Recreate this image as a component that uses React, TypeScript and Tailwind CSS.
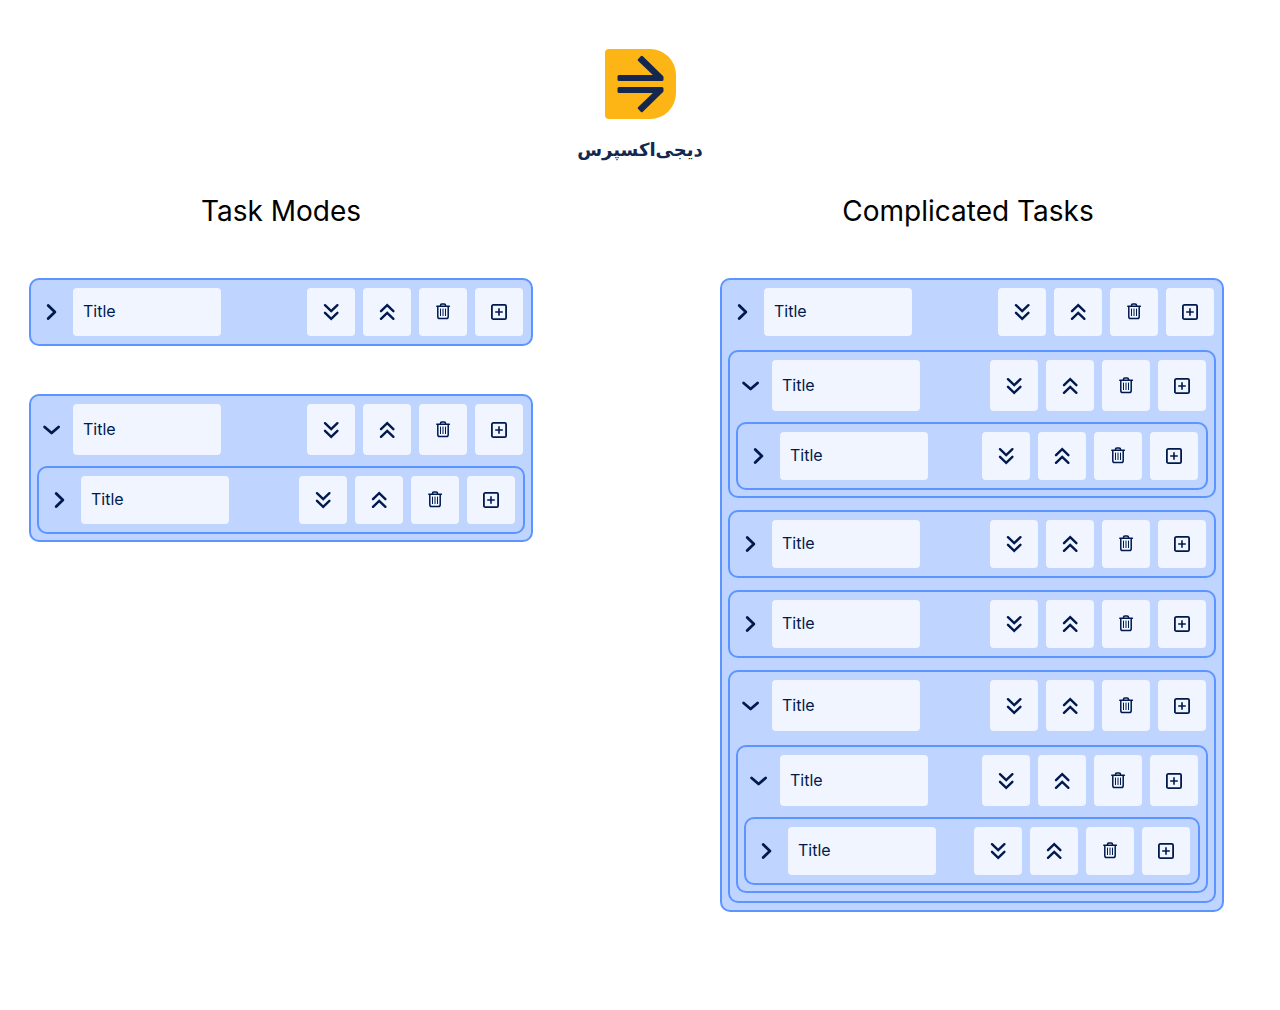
import { useState } from "react";

type Task = { id: string; open?: boolean; children?: Task[] };

const simpleTask: Task = { id: "a" };
const nestedTask: Task = { id: "b", open: true, children: [{ id: "b1" }] };
const complicatedTask: Task = {
  id: "c",
  children: [
    { id: "c1", open: true, children: [{ id: "c1a" }] },
    { id: "c2" },
    { id: "c3" },
    {
      id: "c4",
      open: true,
      children: [{ id: "c4a", open: true, children: [{ id: "c4a1" }] }],
    },
  ],
};

function Logo() {
  return (
    <svg width="71" height="70" viewBox="0 0 71 70" aria-hidden="true">
      <path d="M4 0H45A26 26 0 0 1 71 26V44A26 26 0 0 1 45 70H4A4 4 0 0 1 0 66V4A4 4 0 0 1 4 0Z" fill="#fdb515" />
      <g fill="#14284f" stroke="#14284f" strokeWidth="3" strokeLinejoin="round">
        <path d="M14 27.5H51.5L34.2 11L36.8 8.4L57 28V30.5H14Z" />
        <path d="M14 42.5H51.5L34.2 59L36.8 61.6L57 42V39.5H14Z" />
      </g>
    </svg>
  );
}

function Chevron({ open }: { open: boolean }) {
  return (
    <svg width="20" height="20" viewBox="0 0 20 20" fill="none" stroke="#001a4d" strokeWidth="2.8" strokeLinecap="round" strokeLinejoin="round" aria-hidden="true">
      {open ? <path d="M3.6 7L10.6 13L17.6 7" /> : <path d="M7.2 3.5L13.9 10L7.2 16.5" />}
    </svg>
  );
}

function DoubleDown() {
  return (
    <svg width="20" height="20" viewBox="0 0 20 20" fill="none" stroke="#001a4d" strokeWidth="2.4" strokeLinecap="round" aria-hidden="true">
      <path d="M4 3.2L10.2 9.2L16.4 3.2M4 10.8L10.2 16.8L16.4 10.8" />
    </svg>
  );
}

function DoubleUp() {
  return (
    <svg width="20" height="20" viewBox="0 0 20 20" fill="none" stroke="#001a4d" strokeWidth="2.4" strokeLinecap="round" aria-hidden="true">
      <path d="M4 9.2L10.2 3.2L16.4 9.2M4 16.8L10.2 10.8L16.4 16.8" />
    </svg>
  );
}

function Trash() {
  return (
    <svg width="20" height="20" viewBox="0 0 20 20" fill="none" stroke="#001a4d" strokeLinecap="round" aria-hidden="true">
      <path d="M3.8 4.2H16.4M4.8 4.2V14.8Q4.8 16.6 6.6 16.6H13.4Q15.2 16.6 15.2 14.8V4.2M7.5 4V3.2Q7.5 1.9 8.8 1.9H11.2Q12.5 1.9 12.5 3.2V4" strokeWidth="1.5" />
      <path d="M7.5 7V13.6M10 7V13.6M12.5 7V13.6" strokeWidth="1" />
    </svg>
  );
}

function PlusBox() {
  return (
    <svg width="20" height="20" viewBox="0 0 20 20" fill="none" stroke="#001a4d" strokeWidth="1.8" aria-hidden="true">
      <rect x="2.9" y="2.9" width="14.2" height="14.2" rx="1.4" />
      <path d="M10 6.2V13.8M6.2 10H13.8" strokeWidth="1.6" />
    </svg>
  );
}

const actions = [
  { label: "Move down", Icon: DoubleDown },
  { label: "Move up", Icon: DoubleUp },
  { label: "Delete", Icon: Trash },
  { label: "Add subtask", Icon: PlusBox },
];

function TaskCard({ task, root = false }: { task: Task; root?: boolean }) {
  const [open, setOpen] = useState(Boolean(task.open));
  const children = task.children ?? [];
  const deep = children.some((child) => child.children);
  const spacing = deep ? (root ? "pt-[14px] pb-[7px]" : "pt-[14px] pb-2") : "pt-[11px] pb-1.5";

  return (
    <section className="rounded-[10px] border-2 border-[#5c95ff] bg-[#bfd4ff]">
      <div className={children.length ? "flex items-stretch gap-2 px-2 pt-2" : "flex items-stretch gap-2 p-2"}>
        <button
          type="button"
          aria-label="Toggle subtasks"
          aria-expanded={open}
          onClick={() => setOpen(!open)}
          className="flex w-[26px] shrink-0 items-center justify-start pl-0.5"
        >
          <Chevron open={open} />
        </button>
        <input
          aria-label="Task title"
          defaultValue="Title"
          className={`${open ? "h-[51px]" : "h-12"} w-[148px] min-w-0 rounded bg-[#f0f5ff] px-2.5 pb-0.5 text-base text-[#001a4d] outline-none`}
        />
        <div className="ml-auto flex gap-2">
          {actions.map(({ label, Icon }) => (
            <button key={label} type="button" aria-label={label} className="flex w-12 items-center justify-center rounded bg-[#f0f5ff]">
              <Icon />
            </button>
          ))}
        </div>
      </div>
      {children.length > 0 && (
        <div className={`flex flex-col gap-3 px-1.5 ${spacing}`}>
          {children.map((child) => (
            <TaskCard key={child.id} task={child} />
          ))}
        </div>
      )}
    </section>
  );
}

export default function App() {
  return (
    <div className="min-h-screen bg-white pt-[49px] pb-24 font-['Inter',sans-serif]">
      <header className="flex flex-col items-center gap-4">
        <Logo />
        <p dir="rtl" lang="fa" className="text-[18px] leading-[30px] font-bold whitespace-nowrap text-[#14284f] font-['DejaVu_Sans',sans-serif]">
          دیجی‌اکسپرس
        </p>
      </header>
      <main className="mt-[26px] flex items-start justify-between gap-8 pr-14 pl-[29px]">
        <div className="w-full max-w-[504px]">
          <h1 className="text-center text-[28px] leading-10 text-black">Task Modes</h1>
          <div className="mt-[47px] flex flex-col gap-12">
            <TaskCard task={simpleTask} root />
            <TaskCard task={nestedTask} root />
          </div>
        </div>
        <div className="w-full max-w-[504px]">
          <h1 className="pr-2 text-center text-[28px] leading-10 text-black">Complicated Tasks</h1>
          <div className="mt-[47px]">
            <TaskCard task={complicatedTask} root />
          </div>
        </div>
      </main>
    </div>
  );
}
